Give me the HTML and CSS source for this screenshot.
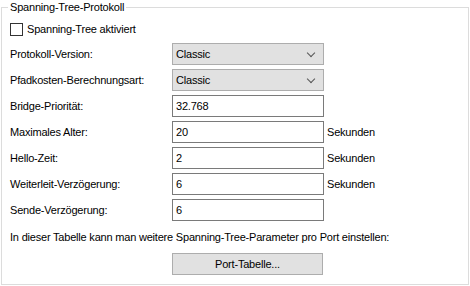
FILE: index.html
```html
<!DOCTYPE html>
<html>
<head>
    <title>Spanning-Tree-Protokoll</title>
    <link rel="stylesheet" href="styles.css">
</head>
<body>
    <fieldset class="group">
        <legend>Spanning-Tree-Protokoll</legend>

        <label class="check-row">
            <span class="checkbox"></span>
            Spanning-Tree aktiviert
        </label>

        <div class="form-grid">
            <label>Protokoll-Version:</label>
            <div class="select">Classic<span class="chevron"></span></div>
            <span></span>

            <label>Pfadkosten-Berechnungsart:</label>
            <div class="select">Classic<span class="chevron"></span></div>
            <span></span>

            <label>Bridge-Priorität:</label>
            <div class="input">32.768</div>
            <span></span>

            <label>Maximales Alter:</label>
            <div class="input">20</div>
            <span class="unit">Sekunden</span>

            <label>Hello-Zeit:</label>
            <div class="input">2</div>
            <span class="unit">Sekunden</span>

            <label>Weiterleit-Verzögerung:</label>
            <div class="input">6</div>
            <span class="unit">Sekunden</span>

            <label>Sende-Verzögerung:</label>
            <div class="input">6</div>
            <span></span>
        </div>

        <p class="hint">In dieser Tabelle kann man weitere Spanning-Tree-Parameter pro Port einstellen:</p>

        <div class="button-row">
            <button class="button">Port-Tabelle...</button>
        </div>
    </fieldset>
</body>
</html>
```

FILE: styles.css
```css
/* Windows dialog look */
body {
    margin: 0;
    padding: 0 1px 0 1px;
    font-family: 'Liberation Sans', Arial, sans-serif;
    font-size: 11px;
    letter-spacing: -0.2px;
    color: #000;
    background-color: #fff;
}
.group {
    margin: 0;
    padding: 4px 8px 10px 8px;
    border: 1px solid #dcdcdc;
    height: 285px;
    box-sizing: border-box;
}
.group legend {
    padding: 0 2px;
    margin-left: -2px;
    line-height: 14px;
}
.check-row {
    display: flex;
    align-items: center;
    gap: 4px;
    height: 16px;
    margin-top: 3px;
}
.checkbox {
    width: 11px;
    height: 11px;
    border: 1px solid #333;
    background-color: #fff;
}
.form-grid {
    display: grid;
    grid-template-columns: 159px 152px auto;
    row-gap: 4px;
    column-gap: 3px;
    align-items: center;
    margin-top: 6px;
}
.select, .input {
    height: 22px;
    box-sizing: border-box;
    display: flex;
    align-items: center;
    padding-left: 3px;
}
.select {
    border: 1px solid #adadad;
    background-color: #e1e1e1;
    position: relative;
}
.input {
    border: 1px solid #7a7a7a;
    background-color: #fff;
}
.chevron {
    position: absolute;
    right: 9px;
    top: 6px;
    width: 5px;
    height: 5px;
    border-right: 1px solid #555;
    border-bottom: 1px solid #555;
    transform: rotate(45deg);
}
.hint {
    margin: 10px 0 0 0;
}
.button-row {
    padding-left: 162px;
    margin-top: 10px;
}
.button {
    width: 151px;
    height: 22px;
    font-family: inherit;
    font-size: inherit;
    letter-spacing: inherit;
    color: #000;
    background-color: #e1e1e1;
    border: 1px solid #adadad;
    border-radius: 0;
    padding: 0;
}
```
